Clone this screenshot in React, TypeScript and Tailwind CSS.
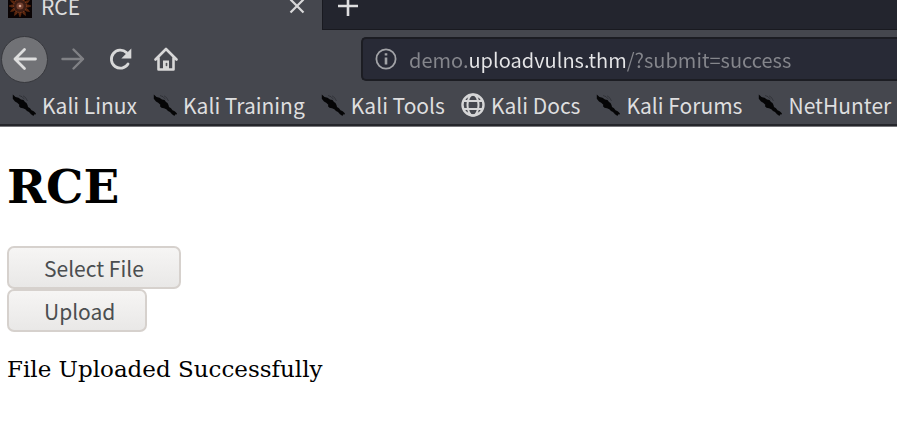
import type { ReactNode } from "react";

const bookmarks = [
  { label: "Kali Linux", icon: "dragon" },
  { label: "Kali Training", icon: "dragon" },
  { label: "Kali Tools", icon: "dragon" },
  { label: "Kali Docs", icon: "globe" },
  { label: "Kali Forums", icon: "dragon" },
  { label: "NetHunter", icon: "dragon" },
];

function Favicon() {
  const petals = Array.from({ length: 12 }, (_, i) => i * 30);
  return (
    <svg viewBox="0 0 24 24" className="size-6 shrink-0" aria-hidden="true">
      <rect width="24" height="24" fill="#090304" />
      {petals.map((a) => (
        <path key={a} d="M12 12 10.8 4 12 1l1.2 3z" fill="#57260f" stroke="#6e3012" strokeWidth=".5" transform={`rotate(${a} 12 12)`} />
      ))}
      <circle cx="12" cy="12" r="6.500" fill="#3c1d14" stroke="#843e20" strokeDasharray="1.5 1.200" />
      <circle cx="12" cy="12" r="3.600" fill="#74402f" />
      <circle cx="12" cy="12" r="1.300" fill="#d8aa98" />
    </svg>
  );
}

function DragonIcon() {
  return (
    <svg viewBox="0 0 24 24" className="size-6 shrink-0" aria-hidden="true">
      <path d="M.8 1.500 3.500 4l3 .8 2.500 1.700 2.500.5 1.500 2 1.500 1 1 2 .5 2 2 1.200 1.500 2 2.200 1 1.600 1.600 1 1.500-2.200.2-.6 1.500-2.500-1.800-2-2.200-2-1-1.700-1.800-2.300-1-2.500-.4-1.500-1.500.3-1.500L5.200 9.700 3 8.500.8 5.800z" fill="#050506" />
      <path d="m7 2.500 3 1.200 2.500 2.600M11 2.800l2.500 1.700 2 3.500" fill="none" stroke="#2b2d32" strokeWidth=".7" />
    </svg>
  );
}

function GlobeIcon() {
  return (
    <svg viewBox="0 0 24 24" className="size-6 shrink-0" fill="none" stroke="#d6d6d7" strokeWidth="2" aria-hidden="true">
      <circle cx="12" cy="12" r="10.500" strokeWidth="2.400" />
      <ellipse cx="12" cy="12" rx="5.500" ry="10.500" />
      <path d="M2 8h20M2 16h20" />
    </svg>
  );
}

function ToolButton({ label, className, children }: { label: string; className: string; children: ReactNode }) {
  return (
    <button type="button" aria-label={label} className={`flex shrink-0 items-center justify-center ${className}`}>
      {children}
    </button>
  );
}

export default function App() {
  return (
    <div className="min-h-screen overflow-hidden bg-white">
      <header className="border-b border-[#77777b] bg-[#45474e] font-['Noto_Sans_CJK_SC','Noto_Sans',sans-serif] text-[21px] leading-6 text-[#dededf]">
        <div className="-mt-[18px] flex h-12 bg-[#23252e]">
          <div className="flex w-[322px] shrink-0 items-center bg-[#45474e] pr-4 pl-2">
            <Favicon />
            <span className="ml-[9px] grow">RCE</span>
            <ToolButton label="Close tab" className="size-[18px]">
              <svg viewBox="0 0 18 18" className="size-[18px]" fill="none" stroke="#d8d8d9" strokeWidth="2.200">
                <path d="m2.500 2.500 13 13M15.500 2.500l-13 13" />
              </svg>
            </ToolButton>
          </div>
          <div className="flex grow items-center border-b border-l border-[#191a20] pl-[14px]">
            <ToolButton label="New tab" className="size-[22px]">
              <svg viewBox="0 0 22 22" className="size-[22px]" fill="none" stroke="#dededf" strokeWidth="2.600">
                <path d="M1 11h20M11 1v20" />
              </svg>
            </ToolButton>
          </div>
        </div>

        <div className="flex h-[58px] items-center pl-px">
          <ToolButton label="Back" className="size-[47px] rounded-full border border-[#37383d] bg-[#717276]">
            <svg viewBox="0 0 24 24" className="size-6" fill="none" stroke="#dedede" strokeWidth="2.800" strokeLinecap="round" strokeLinejoin="round">
              <path d="M22.500 12H2M11.500 2.500 2 12l9.500 9.500" />
            </svg>
          </ToolButton>
          <ToolButton label="Forward" className="ml-[13px] size-6">
            <svg viewBox="0 0 24 24" className="size-6" fill="none" stroke="#808185" strokeWidth="2.400" strokeLinecap="round" strokeLinejoin="round">
              <path d="M1.500 12H22M12.500 2.500 22 12l-9.500 9.500" />
            </svg>
          </ToolButton>
          <ToolButton label="Reload" className="ml-6 size-6">
            <svg viewBox="0 0 24 24" className="size-6" fill="none" stroke="#d8d8d8" strokeWidth="2.800" strokeLinecap="round">
              <path d="M19 17A9 9 0 1 1 17.500 5.600" />
              <path d="M22.300 1.500v10h-10z" fill="#d8d8d8" stroke="none" />
            </svg>
          </ToolButton>
          <ToolButton label="Home" className="ml-[21px] size-6">
            <svg viewBox="0 0 24 24" className="size-6" fill="none" stroke="#d8d8d8" strokeWidth="2.600" strokeLinecap="round" strokeLinejoin="round">
              <path d="M1.500 12.500 12 2l10.500 10.500M4.500 11v11.500h15V11" />
              <path d="M9 22v-8.500h6V22z" fill="#d8d8d8" stroke="none" />
              <path d="M12.500 16.500v2" stroke="#55565b" strokeWidth="1.600" />
            </svg>
          </ToolButton>
          <div className="ml-[183px] flex h-11 min-w-0 grow items-center rounded-l-[5px] border-2 border-r-0 border-[#1c1d23] bg-[#282a36] pl-3">
            <svg viewBox="0 0 22 22" className="size-[22px] shrink-0" fill="none" stroke="#a2a3a7" strokeWidth="1.800" aria-hidden="true">
              <circle cx="11" cy="11" r="9.600" />
              <path d="M11 9.500v7M11 5.200v2.400" strokeWidth="2.600" />
            </svg>
            <input
              type="text"
              aria-label="Address"
              defaultValue="demo.uploadvulns.thm/?submit=success"
              className="ml-3 h-8 min-w-0 grow bg-[linear-gradient(to_right,#85868c_59px,#e6e6e8_59px,#e6e6e8_217px,#85868c_217px)] bg-clip-text text-xl text-transparent outline-none"
            />
          </div>
        </div>

        <nav aria-label="Bookmarks" className="flex h-[38px] items-center gap-4 border-b-2 border-[#25262b] pb-[2px] pl-3">
          {bookmarks.map((b) => (
            <a key={b.label} href="#" className="flex shrink-0 items-center gap-[6px] whitespace-nowrap">
              {b.icon === "globe" ? <GlobeIcon /> : <DragonIcon />}
              {b.label}
            </a>
          ))}
        </nav>
      </header>

      <main className="px-[7px] pt-8 font-['DejaVu_Serif',serif] text-black">
        <h1 className="text-[47px] leading-[56px] font-bold">RCE</h1>
        <form className="mt-[31px] flex flex-col items-start font-['Noto_Sans_CJK_SC','Noto_Sans',sans-serif] text-[21px] leading-6 text-[#4b4e50]">
          <button type="button" className="h-[43px] w-[174px] rounded-[7px] border-2 border-[#d6d1cd] bg-linear-to-b from-[#f6f5f4] to-[#e9e8e7] pl-[35px] text-left">
            Select File
          </button>
          <button type="button" className="h-[43px] w-[140px] rounded-[7px] border-2 border-[#d6d1cd] bg-linear-to-b from-[#f6f5f4] to-[#e9e8e7] pl-[35px] text-left">
            Upload
          </button>
        </form>
        <p className="mt-[21px] text-[23px] leading-8">File Uploaded Successfully</p>
      </main>
    </div>
  );
}
